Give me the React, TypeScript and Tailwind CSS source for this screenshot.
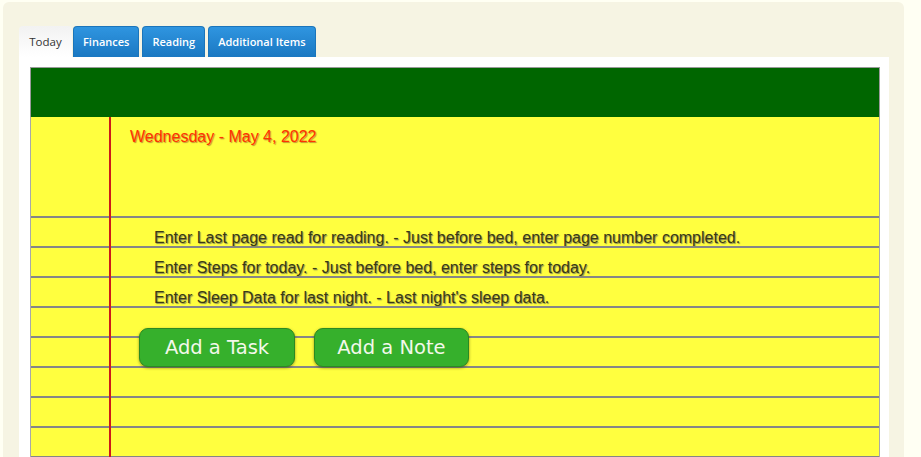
import React from "react";

const tasks = [
  "Enter Last page read for reading. - Just before bed, enter page number completed.",
  "Enter Steps for today. - Just before bed, enter steps for today.",
  "Enter Sleep Data for last night. - Last night's sleep data.",
];

const tabs = ["Finances", "Reading", "Additional Items"];

export default function App() {
  return (
    <div className="h-[457px] w-full overflow-hidden bg-[#fffff3]">
      <div className="ml-[3px] mt-[2px] w-[901px] h-[470px] rounded-[6px] bg-[#f6f4e3] pt-[24px] pl-[16px]">
        <div className="flex h-[31px] items-stretch font-['Open_Sans',sans-serif] text-[11px]">
          <div className="flex w-[53px] items-center justify-center rounded-t-[4px] bg-linear-to-b from-[#f2f2f2] to-[#ffffff] text-[11.5px] text-[#333333]">
            Today
          </div>
          <div className="ml-[1px] flex gap-[3px]">
            {tabs.map((t) => (
              <div
                key={t}
                className="flex items-center rounded-t-[4px] border border-b-0 border-[#1b75bb] bg-linear-to-b from-[#2f95e0] to-[#1a78c2] px-[9px] font-semibold text-white"
              >
                {t}
              </div>
            ))}
          </div>
        </div>
        <div className="w-[870px] h-[420px] bg-white pl-[11px] pr-[9px] pt-[10px]">
          <div className="h-[50px] border-x border-t border-[#9a9a9a] bg-[#006600]" />
          <div className="relative border-x border-[#a8a8a8] bg-[#ffff3f] font-['Liberation_Sans',Arial,sans-serif] text-[16px]">
            <div className="h-[101px] border-b-2 border-[#868686] pl-[99px] pt-[10px] leading-[20px] text-[#ff3300] [text-shadow:1px_1px_1px_#c09030]">
              Wednesday - May 4, 2022
            </div>
            {tasks.map((t) => (
              <div
                key={t}
                className="h-[30px] border-b-2 border-[#868686] pl-[123px] pt-[10px] leading-[20px] text-[#3a3a14] [text-shadow:1px_1px_1px_#8a8a50]"
              >
                {t}
              </div>
            ))}
            {[0, 1, 2, 3, 4].map((i) => (
              <div key={i} className="h-[30px] border-b-2 border-[#868686]" />
            ))}
            <div className="absolute left-[78px] top-0 bottom-0 w-[2px] bg-[#cc1a1a]" />
            <div className="absolute left-[108px] top-[211px] flex gap-[19px] font-['DejaVu_Sans',sans-serif] text-[19.5px]">
              <button className="flex h-[39px] w-[156px] items-center justify-center rounded-[9px] border border-[#2b8a22] bg-[#36b02c] text-[#f3f8ea] shadow-[0_1px_3px_rgba(60,60,0,0.55)]">
                Add a Task
              </button>
              <button className="flex h-[39px] w-[155px] items-center justify-center rounded-[9px] border border-[#2b8a22] bg-[#36b02c] text-[#f3f8ea] shadow-[0_1px_3px_rgba(60,60,0,0.55)]">
                Add a Note
              </button>
            </div>
          </div>
        </div>
      </div>
    </div>
  );
}
